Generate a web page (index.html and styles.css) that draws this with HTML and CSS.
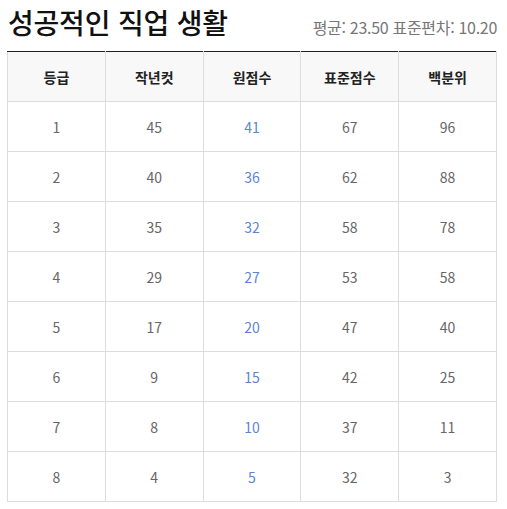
FILE: index.html
```html
<!DOCTYPE html>
<html lang="ko">
<head>
<meta charset="utf-8">
<link rel="stylesheet" href="styles.css">
</head>
<body>
<div class="wrap">
  <div class="head">
    <h1 class="title">성공적인 직업 생활</h1>
    <div class="stats">평균: 23.50 표준편차: 10.20</div>
  </div>
  <table class="grid">
    <thead>
      <tr><th>등급</th><th>작년컷</th><th>원점수</th><th>표준점수</th><th>백분위</th></tr>
    </thead>
    <tbody>
      <tr><td>1</td><td>45</td><td class="raw">41</td><td>67</td><td>96</td></tr>
      <tr><td>2</td><td>40</td><td class="raw">36</td><td>62</td><td>88</td></tr>
      <tr><td>3</td><td>35</td><td class="raw">32</td><td>58</td><td>78</td></tr>
      <tr><td>4</td><td>29</td><td class="raw">27</td><td>53</td><td>58</td></tr>
      <tr><td>5</td><td>17</td><td class="raw">20</td><td>47</td><td>40</td></tr>
      <tr><td>6</td><td>9</td><td class="raw">15</td><td>42</td><td>25</td></tr>
      <tr><td>7</td><td>8</td><td class="raw">10</td><td>37</td><td>11</td></tr>
      <tr><td>8</td><td>4</td><td class="raw">5</td><td>32</td><td>3</td></tr>
    </tbody>
  </table>
</div>
</body>
</html>
```

FILE: styles.css
```css
html, body { margin: 0; padding: 0; background: #fff; }
body { font-family: "Noto Sans CJK KR", "Noto Sans", sans-serif; }
.wrap { padding: 0 10px 0 7px; }
.head {
  display: flex;
  justify-content: space-between;
  align-items: flex-end;
  height: 51px;
  box-sizing: border-box;
  padding: 0 0 10px 1px;
}
.title {
  margin: 0;
  font-size: 28px;
  font-weight: 500;
  line-height: 38px;
  color: #111;
  letter-spacing: -0.2px;
}
.stats {
  font-size: 16px;
  color: #777;
  line-height: 20px;
  padding-bottom: 4px;
  letter-spacing: -0.3px;
}
.grid {
  width: 490px;
  border-collapse: collapse;
  table-layout: fixed;
  border-top: 1px solid #222;
}
.grid th, .grid td {
  border: 1px solid #ddd;
  text-align: center;
  height: 49px;
  padding: 0;
}
.grid thead th {
  border-top: 1px solid #222;
  background: #f8f8f8;
  font-weight: 700;
  font-size: 14px;
  color: #222;
}
.grid td {
  font-size: 14px;
  color: #666;
}
.grid td.raw { color: #5b84d6; }
```
